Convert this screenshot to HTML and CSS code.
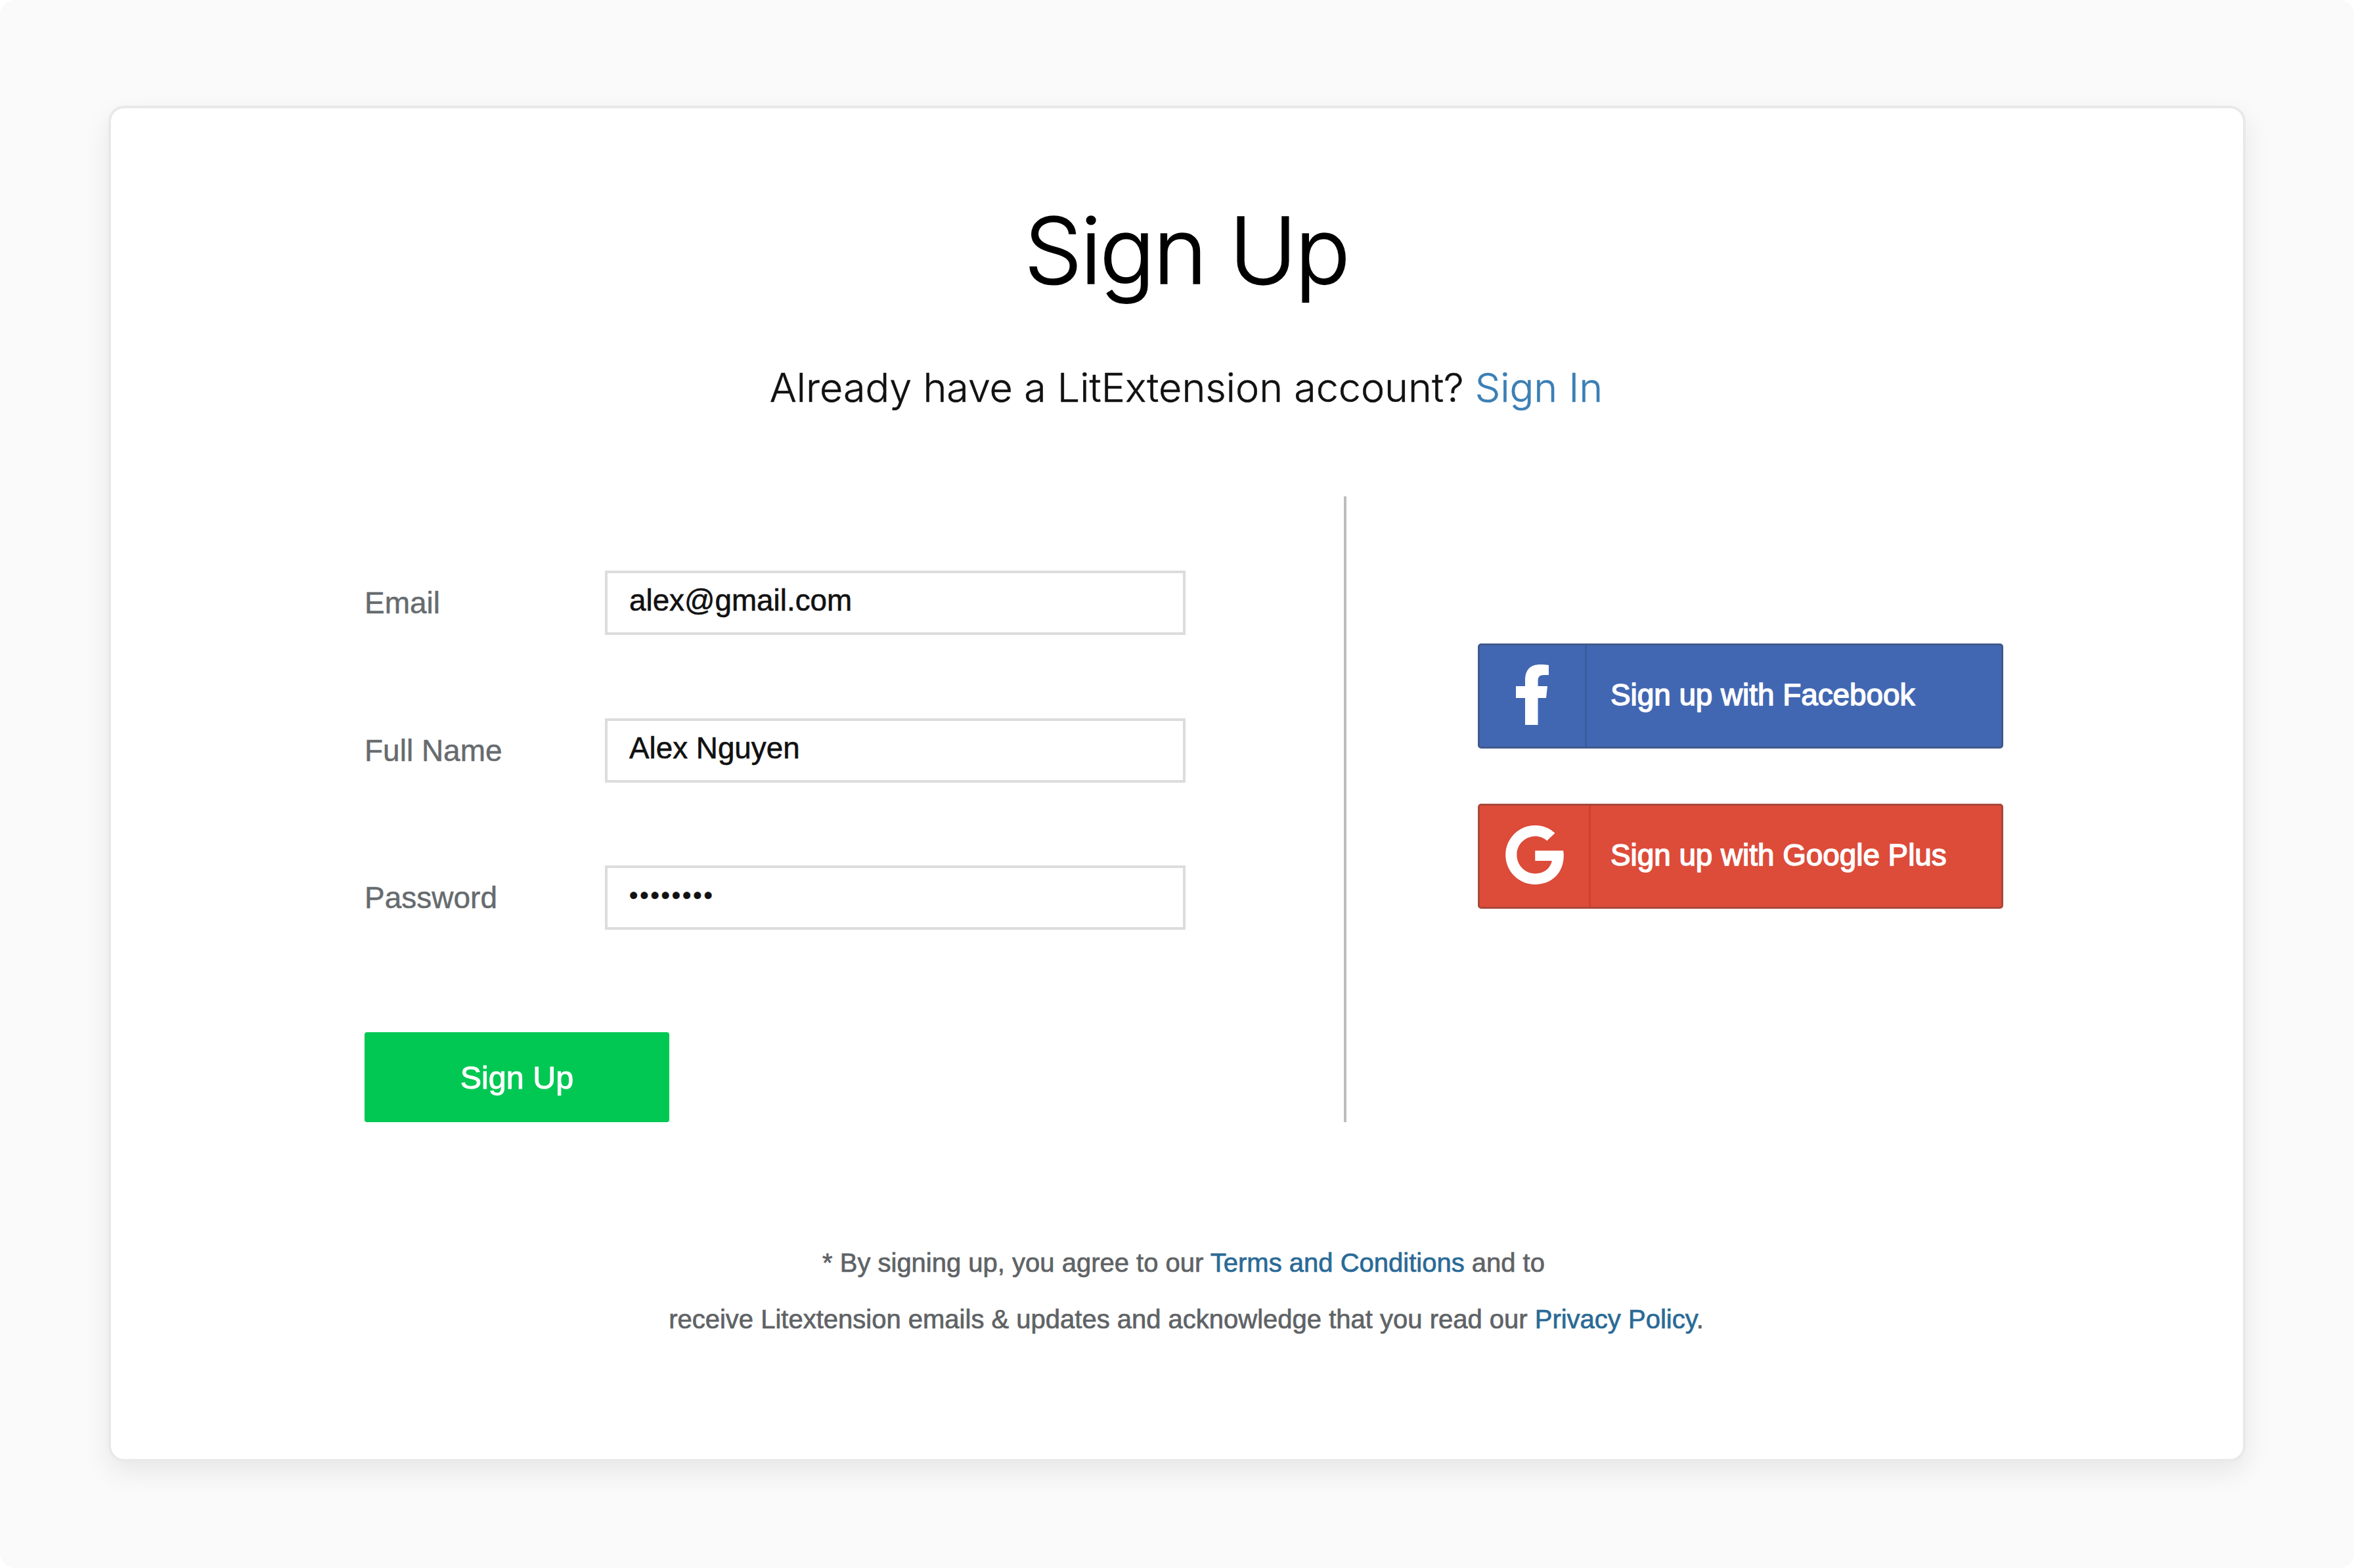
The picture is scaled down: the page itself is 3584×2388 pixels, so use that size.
FILE: index.html
```html
<!DOCTYPE html>
<html lang="en">
<head>
<meta charset="utf-8">
<title>Sign Up</title>
<link rel="stylesheet" href="styles.css">
</head>
<body>
<main class="page">
  <section class="card">
    <header class="intro">
      <h1 class="title">Sign Up</h1>
      <p class="subtitle">Already have a LitExtension account? <a class="link-light" href="#">Sign In</a></p>
    </header>
    <div class="columns">
      <form class="form">
        <div class="field"><span class="label">Email</span><div class="input">alex@gmail.com</div></div>
        <div class="field"><span class="label">Full Name</span><div class="input">Alex Nguyen</div></div>
        <div class="field"><span class="label">Password</span><div class="input masked">••••••••</div></div>
        <button class="submit" type="button">Sign Up</button>
      </form>
      <div class="social">
        <a class="social-button facebook" href="#">
          <span class="social-icon"><svg class="icon-facebook" viewBox="0 0 50 92"><path d="M14 92V51H0V33H14V24C14 8 22 0 37 0C42 0 46 0 50 1V16H43C36 16 33.500 19 33.500 25V33H48L46 51H33.500V92Z"/></svg></span>
          <span class="social-text">Sign up with Facebook</span>
        </a>
        <a class="social-button google" href="#">
          <span class="social-icon"><svg class="icon-google" viewBox="0 8 488 496"><path d="M488 261.8C488 403.300 391.100 504 248 504 110.800 504 0 393.200 0 256S110.800 8 248 8c66.800 0 123 24.500 166.300 64.900l-67.500 64.900C258.500 52.600 94.300 116.600 94.300 256c0 86.500 69.100 156.600 153.700 156.600 98.200 0 135-70.400 140.800-106.900H248v-85.300h236.100c2.300 12.700 3.900 24.900 3.900 41.400z"/></svg></span>
          <span class="social-text">Sign up with Google Plus</span>
        </a>
      </div>
    </div>
    <p class="legal">
      <span class="legal-line first">* By signing up, you agree to our <a class="link" href="#">Terms and Conditions</a> and to</span>
      <span class="legal-line">receive Litextension emails &amp; updates and acknowledge that you read our <a class="link" href="#">Privacy Policy</a>.</span>
    </p>
  </section>
</main>
</body>
</html>
```
FILE: styles.css
```css
* { box-sizing: border-box; }

body {
  margin: 0;
  background: #fff;
  font-family: "Liberation Sans", Arial, sans-serif;
}

.page {
  height: 2388px;
  padding: 161px 165px 162px;
  border-radius: 22px;
  background: #fafafa;
}

.card {
  height: 2065px;
  padding: 136px 0 0 28px;
  border: 4px solid #e9e9e9;
  border-radius: 24px;
  background: #fff;
  background-clip: padding-box;
  box-shadow: 0 16px 40px rgba(0, 0, 0, 0.08);
}

.intro {
  font-family: Inter, "Liberation Sans", sans-serif;
  font-weight: 300;
  text-align: center;
}

.title {
  margin: 0;
  font-size: 140px;
  font-weight: 300;
  line-height: 160px;
  letter-spacing: -3px;
  color: #000;
  -webkit-text-stroke: 1.500px #000;
}

.subtitle {
  margin: 89px 0 0;
  font-size: 61px;
  line-height: 80px;
  color: #111;
  -webkit-text-stroke: 0.500px currentColor;
}

.link-light { color: #3b7fb5; text-decoration: none; }

.columns {
  display: flex;
  height: 953px;
  margin-top: 126px;
  padding-left: 358px;
}

.form {
  width: 1495px;
  padding-top: 113px;
  border-right: 4px solid #bdbdbd;
}

.field {
  display: flex;
  align-items: center;
  height: 98px;
  margin-bottom: 126.500px;
}

.label {
  width: 366px;
  font-size: 46px;
  line-height: 98px;
  color: #666b6e;
  -webkit-text-stroke: 0.500px currentColor;
}

.input {
  width: 884px;
  height: 98px;
  padding-left: 33px;
  border: 4px solid #dcdcdc;
  font-size: 45.800px;
  line-height: 84px;
  color: #111;
  -webkit-text-stroke: 0.600px currentColor;
}

.masked {
  font-size: 38px;
  letter-spacing: 2.900px;
}

.submit {
  display: block;
  width: 464px;
  height: 137px;
  margin-top: 156px;
  padding: 0;
  border: 0;
  border-radius: 4px;
  background: #00c853;
  font: 48.500px/138px "Liberation Sans", Arial, sans-serif;
  color: #fff;
  -webkit-text-stroke: 1px #fff;
}

.social {
  display: flex;
  flex-direction: column;
  gap: 84px;
  width: 800px;
  margin: 224px 0 0 200px;
}

.social-button {
  display: flex;
  height: 160px;
  border: 3px solid #40598c;
  border-radius: 5px;
  background: #4267b2;
  font-size: 45.800px;
  line-height: 152px;
  color: #fff;
  text-decoration: none;
}

.social-icon {
  display: flex;
  align-items: center;
  justify-content: center;
  width: 163px;
  padding-bottom: 4px;
  border-right: 3px solid #3b5ca0;
}

.social-text { padding-left: 36px; -webkit-text-stroke: 1.500px #fff; }

.google { border-color: #a9483b; background: #dd4b39; }
.google .social-icon { width: 169px; border-color: #cb4232; }
.google .social-text { padding-left: 30px; }

.icon-facebook { width: 50px; height: 92px; fill: #fff; }
.icon-google { width: 89px; height: 90px; fill: #fff; }

.legal {
  margin: 171px 0 0;
  font-size: 40px;
  line-height: 86px;
  text-align: center;
  color: #5f6366;
  -webkit-text-stroke: 0.700px currentColor;
}

.legal-line { display: block; }
.legal-line.first { padding-right: 8px; }
.link { color: #2a6a96; text-decoration: none; }
```
